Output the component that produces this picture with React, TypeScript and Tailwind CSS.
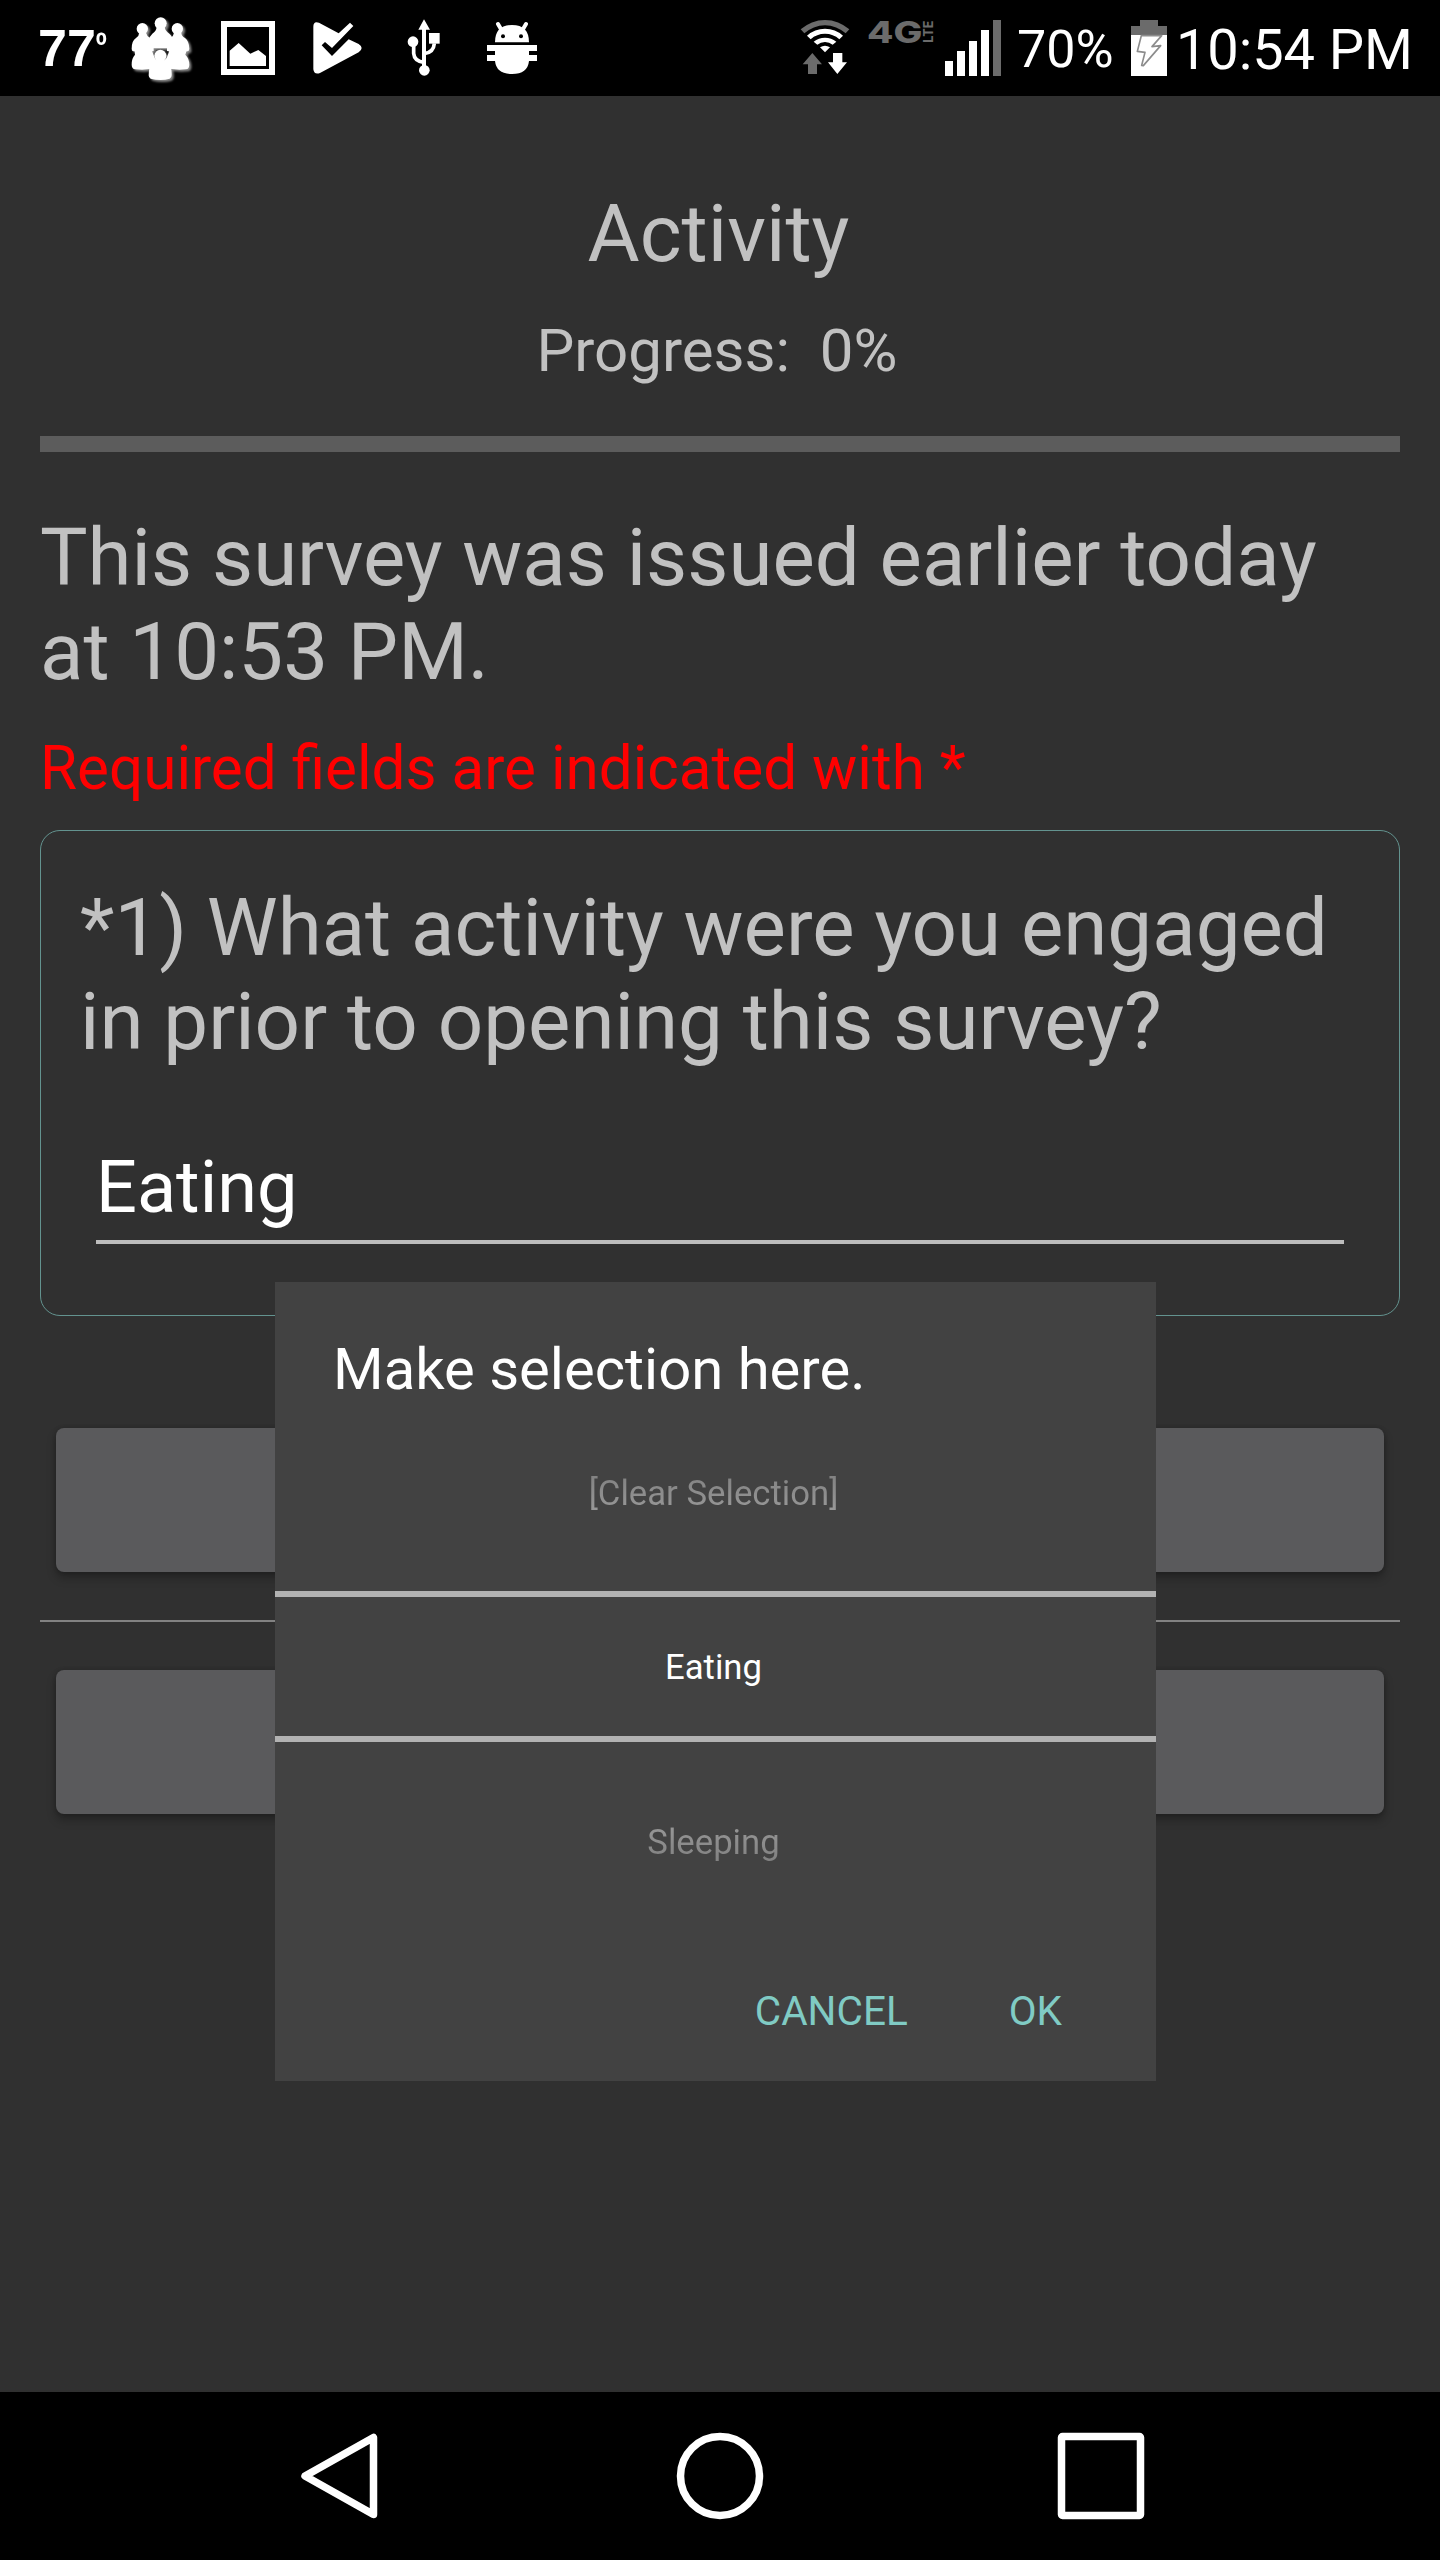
import type { ReactNode } from "react";

const GRAY = "#6b6b6b";

/* Status icons share one coordinate space: three units per pixel, 288 units for the bar's height. */
function StatusIcon({ x, w, className, children }: { x: number; w: number; className: string; children: ReactNode }) {
  return (
    <svg className={`h-24 shrink-0 overflow-visible ${className}`} viewBox={`${x} 0 ${w} 288`} fill="#fff" aria-hidden="true">
      {children}
    </svg>
  );
}

function PeopleIcon() {
  return (
    <StatusIcon x={390} w={189} className="ml-[23px] w-[63px] drop-shadow-[2px_2px_1px_#8a8a8a]">
      <circle cx="482" cy="70" r="18" />
      <circle cx="427" cy="86" r="17" />
      <circle cx="532" cy="86" r="17" />
      <path d="M470 82h24q2 12 14 19 10 8 11 24v16q-12 4-20 4l-40 0q-10 0-14-6v-16q3-14 12-22 12-8 13-19z" />
      <path d="M418 98h20q2 10 13 17l10 14v24q-25 6-62 1-4-2-4-8 0-24 13-32 9-6 10-16z" />
      <path d="M522 98h22q0 10 11 16 12 9 13 32 0 6-5 8-36 5-62-1v-24l10-14q10-7 11-17z" />
      <path d="M404 152h52l8 22 8 10v18q-30 10-66 6-11-2-11-14 0-20 10-30z" />
      <path d="M508 152h52l-4 12q12 12 12 30 0 12-10 14-34 4-68-6v-18l10-10z" />
      <circle cx="481" cy="167" r="18" />
      <path d="M470 178h22q1 7 12 12 12 7 11 36 0 8-6 10-26 8-57 0-6-2-6-10 0-28 12-36 11-5 12-12z" />
    </StatusIcon>
  );
}

function PictureIcon() {
  return (
    <StatusIcon x={663} w={162} className="ml-[28px] w-[54px]">
      <path fillRule="evenodd" d="M663 63h162v162H663zM681 81v126h126V81z" />
      <path d="M689 198V152l27-23 35 32 24-11 23 18v30z" />
    </StatusIcon>
  );
}

function PlayCheckIcon() {
  return (
    <StatusIcon x={939} w={150} className="ml-[38px] w-[50px]">
      <path d="M940 80Q940 62 957 68L1016 100 1050 68 1060 78 996 144 975 126 965 136 996 168 1046 118 1076 132Q1094 144 1076 157L960 219Q942 225 940 208Z" />
    </StatusIcon>
  );
}

function UsbIcon() {
  return (
    <StatusIcon x={262} w={102} className="ml-[44px] w-[34px]">
      <path d="M313 58l18 31h-12v111h-12V89h-11z" />
      <circle cx="314" cy="211" r="16" />
      <circle cx="280" cy="125" r="16" />
      <path d="M328 99h32v32h-32z" />
      <path d="M282 138v22q2 24 31 27M344 130q-2 28-31 31" fill="none" stroke="#fff" strokeWidth="11" />
    </StatusIcon>
  );
}

function BugIcon() {
  return (
    <StatusIcon x={501} w={150} className="ml-[46px] w-[50px]">
      <path d="M534 72l14 24M618 72l-14 24" stroke="#fff" strokeWidth="12" strokeLinecap="round" />
      <path d="M525 127q0-52 51-52t51 52z" />
      <circle cx="549" cy="109" r="6" fill="#000" />
      <circle cx="603" cy="109" r="6" fill="#000" />
      <path d="M501 135h150v18h-24v12h24v18h-24q-4 39-51 39t-51-39h-24v-18h24v-12h-24z" />
    </StatusIcon>
  );
}

function WifiIcon() {
  return (
    <StatusIcon x={60} w={150} className="w-[50px]">
      <path fill={GRAY} d="M62 88A109 109 0 0 1 208 88L197 100A92 92 0 0 0 73 100Z" />
      <path d="M81 107A80 80 0 0 1 189 107L178 118A64 64 0 0 0 92 118Z" />
      <path d="M101 125A54 54 0 0 1 169 125L158 134A36 36 0 0 0 112 134Z" />
      <path d="M120 142Q135 133 150 142L135 157Z" />
      <path fill={GRAY} d="M97 159l29 34h-15v29H84v-29H68z" />
      <path d="M159 159h28v28h14l-29 35-28-35h15z" />
    </StatusIcon>
  );
}

function NetworkLabel() {
  return (
    <StatusIcon x={261} w={201} className="ml-[17px] w-[67px]">
      <g fill={GRAY} fontFamily="Inter, sans-serif" fontWeight="800">
        <text x="261" y="128" fontSize="89" textLength="166" lengthAdjust="spacingAndGlyphs">4G</text>
        <text transform="translate(459 128) rotate(-90)" fontSize="41" fontWeight="700" textLength="66" lengthAdjust="spacingAndGlyphs">LTE</text>
      </g>
    </StatusIcon>
  );
}

function SignalIcon() {
  return (
    <StatusIcon x={495} w={168} className="ml-[11px] w-[56px]">
      <path d="M495 183h24v45h-24zM531 153h24v75h-24zM567 123h24v105h-24zM603 90h24v138h-24z" />
      <path fill={GRAY} d="M639 60h24v168h-24z" />
    </StatusIcon>
  );
}

function BatteryIcon() {
  return (
    <StatusIcon x={93} w={108} className="w-[36px]">
      <path fill={GRAY} d="M120 60h54v18h27v27H93V78h27z" />
      <path d="M93 105h108v123H93z" />
      <path d="M124 107h61l-29 33 26-3-52 60-5-1 10-39-23-3z" fill="none" stroke="#8c8c8c" strokeWidth="5" strokeLinejoin="round" />
    </StatusIcon>
  );
}

function StatusBar() {
  return (
    <header className="flex h-24 shrink-0 items-center bg-black text-white">
      <div className="ml-[38px] flex w-[69px] items-start font-['Liberation_Sans',sans-serif] font-bold">
        <span className="text-[52px] leading-[60px]">77</span>
        <span className="mt-[9px] origin-top scale-y-125 text-[30px] leading-[30px]">º</span>
      </div>
      <PeopleIcon />
      <PictureIcon />
      <PlayCheckIcon />
      <UsbIcon />
      <BugIcon />
      <div className="ml-auto flex items-center pr-[27px]">
        <WifiIcon />
        <NetworkLabel />
        <SignalIcon />
        <span className="ml-[16px] w-[114px] text-[52px] leading-[96px] whitespace-nowrap">
          <span className="relative top-[2px]">70%</span>
        </span>
        <BatteryIcon />
        <span className="ml-[9px] w-[237px] text-[56px] leading-[96px] tracking-[-0.1px] whitespace-nowrap">
          <span className="relative top-[2px]">10:54 PM</span>
        </span>
      </div>
    </header>
  );
}

function SurveyButton({ className }: { className: string }) {
  return (
    <button
      type="button"
      className={`mx-4 block h-36 w-[1328px] rounded-lg bg-[#5a5a5c] shadow-[0_6px_10px_rgba(0,0,0,0.28),0_0_4px_rgba(0,0,0,0.2)] ${className}`}
    />
  );
}

function Survey() {
  return (
    <main className="h-[2296px] shrink-0 px-10 pt-[91px] text-[#c1c1c1]">
      <h1 className="pr-[3px] text-center text-[80px] leading-[94px]">Activity</h1>
      <p className="mt-[35px] pr-[6px] text-center text-[60px] leading-[70px]">Progress:&nbsp; 0%</p>
      <div className="mt-[50px] h-4 bg-[#5c5c5c]" />
      <p className="mt-[59px] text-[79.8px] leading-[94px]">
        This survey was issued earlier today
        <br />
        at 10:53 PM.
      </p>
      <p className="mt-[35px] text-[60.2px] leading-[70px] text-[#ff0000]">Required fields are indicated with *</p>
      <section className="mt-[26px] h-[486px] rounded-[20px] border border-[#63938f] px-[39px] pt-[50px]">
        <p className="text-[79.85px] leading-[94px] whitespace-nowrap">
          *1) What activity were you engaged
          <br />
          in prior to opening this survey?
        </p>
        <div className="mx-4 mt-[77px] border-b-4 border-[#bdbdbd] pb-[10px] text-[72px] leading-[84px] text-white">Eating</div>
      </section>
      <SurveyButton className="mt-[112px]" />
      <div className="mt-12 h-0.5 bg-[#828282]" />
      <SurveyButton className="mt-12" />
    </main>
  );
}

function SelectionDialog() {
  return (
    <div role="dialog" className="absolute top-[1282px] left-[275px] h-[799px] w-[881px] bg-[#424242] text-white">
      <h2 className="pt-[52px] pl-[58px] text-[58px] leading-[70px]">Make selection here.</h2>
      <div className="pt-[68px] pr-1 text-center text-[34.7px] leading-[42px] whitespace-nowrap">
        <div className="bg-linear-to-b from-[#808080] to-[#9a9a9a] bg-clip-text text-transparent">[Clear Selection]</div>
      </div>
      <div className="mt-[77px] h-[151px] border-y-[6px] border-[#b2b2b2] pt-[49px] pr-1 text-center text-[34.7px] leading-[42px]">Eating</div>
      <div className="pt-[79px] pr-1 text-center text-[34.7px] leading-[42px]">
        <div className="bg-linear-to-b from-[#9a9a9a] to-[#808080] bg-clip-text text-transparent">Sleeping</div>
      </div>
      <div className="mt-[124px] flex justify-end gap-[101px] pr-[94px] text-[40.5px] leading-[48px] text-[#80cbc4]">
        <button type="button">CANCEL</button>
        <button type="button">OK</button>
      </div>
    </div>
  );
}

function NavigationBar() {
  return (
    <nav className="flex h-[168px] shrink-0 items-center bg-black pl-[300px]">
      <svg className="h-[88px] w-[78px]" viewBox="0 0 78 88" fill="none" stroke="#fff" strokeWidth="7.5" strokeLinejoin="round">
        <path d="M73.5 5.5V82.5L5 44Z" />
      </svg>
      <svg className="ml-[298px] size-[88px]" viewBox="0 0 88 88" fill="none" stroke="#fff" strokeWidth="7.5">
        <circle cx="44" cy="44" r="39.5" />
      </svg>
      <svg className="ml-[293px] size-[88px]" viewBox="0 0 88 88" fill="none" stroke="#fff" strokeWidth="7.5">
        <rect x="4.5" y="4.5" width="79" height="79" rx="1" />
      </svg>
    </nav>
  );
}

export default function App() {
  return (
    <div className="relative flex h-[2560px] w-[1440px] flex-col overflow-hidden bg-[#303030] font-[Roboto,sans-serif]">
      <StatusBar />
      <Survey />
      <NavigationBar />
      <SelectionDialog />
    </div>
  );
}
